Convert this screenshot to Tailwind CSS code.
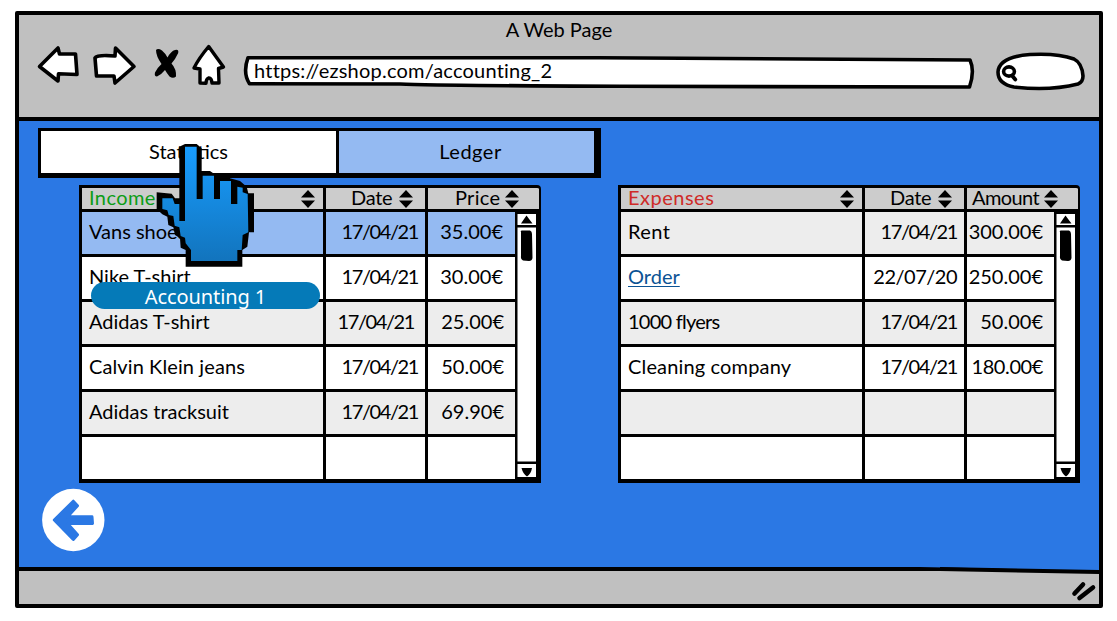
<!DOCTYPE html>
<html lang="en">
<head>
<meta charset="utf-8">
<title>A Web Page</title>
<script src="https://cdn.jsdelivr.net/npm/@tailwindcss/browser@4"></script>
</head>
<body class="h-[621px] overflow-hidden bg-white pl-[15px] pt-[11px] font-[Lato,sans-serif] text-[20px] leading-6 text-black">
<div class="relative flex h-[597px] w-[1088px] flex-col rounded-[2px] border-4 border-black bg-[#2b78e4]">

  <header class="h-[106px] shrink-0 border-b-4 border-black bg-[#c0c0c0]">
    <h1 class="flex h-[26px] items-start justify-center pt-[2px]">A Web Page</h1>
    <div class="flex items-start pl-[17px]">
      <svg class="h-[46px] w-[46px]" viewBox="36 41 46 46" fill="#fff" stroke="#000" stroke-width="3.6" stroke-linejoin="round" stroke-linecap="round"><path d="M39.500 66.500L58 48L59.500 54L75.500 54L77 74.500L58.500 73.800L58 81Z"/></svg>
      <svg class="ml-[9px] h-[46px] w-[46px]" viewBox="91 41 46 46" fill="#fff" stroke="#000" stroke-width="3.6" stroke-linejoin="round" stroke-linecap="round"><path d="M95 58Q97 54.500 115 56L115.500 48L134 66.500L115 83L114 76L96.500 76Z"/></svg>
      <svg class="ml-[15px] h-[46px] w-[30px]" viewBox="152 41 30 46"><path d="M156 50Q158 47.800 162 50.500Q166 54 167.500 57.500Q171 51 175 50Q179 49 178.200 53Q175.500 59 171.500 63.500Q176.500 69 176 76.500Q173 79 169.500 76.500Q167 73.500 165 70Q161 75 157 76.500Q154 76.500 155 72.500Q158 67 161.500 64Q156 56 156 50Z"/></svg>
      <svg class="ml-[8px] h-[48px] w-[38px]" viewBox="190 41 38 48" fill="#fff" stroke="#000" stroke-width="3.4" stroke-linejoin="round" stroke-linecap="round"><path d="M208.700 46.500Q214 54 223.500 67L218.500 68.500L219 83L212 83Q211.500 77.500 208.500 78Q206 79 206 83.300L200 83L200 69L194 68Q199 58 208.700 46.500Z"/></svg>
      <div class="relative ml-[14px] mt-[11px] h-[40px] w-[734px]">
        <svg class="absolute inset-0 h-[40px] w-[734px]" viewBox="242 52 734 40" fill="#fff" stroke="#000" stroke-width="3.6" stroke-linejoin="round"><path d="M248 57.700L600 57.700L970 60Q975 71 969.500 87L620 86.300Q430 85.500 400 84L249.500 83.800Q242.500 73 248 57.700Z"/></svg>
        <span class="relative block pl-[12px] pt-[6px] tracking-[0.22px]">https://ezshop.com/accounting_2</span>
      </div>
      <svg class="ml-[18px] mt-[9px] h-[44px] w-[94px]" viewBox="994 50 94 44" fill="#fff" stroke="#000" stroke-linejoin="round" stroke-linecap="round"><path stroke-width="3.6" d="M998 72Q999 57 1030 54.500Q1058 53 1074 59Q1082 63 1083 76Q1083 82 1078 84Q1050 91 1014 87Q998 84 998 72Z"/><ellipse cx="1009" cy="71.500" rx="5.400" ry="4.600" stroke-width="3.600"/><path stroke-width="3.800" d="M1012 75.500L1015.300 79.500"/></svg>
    </div>
  </header>

  <main class="flex grow flex-col pl-[19px] pt-[7px]">
    <div class="flex h-[50px] w-[563px] border-b-[5px] border-l-[3px] border-r-[7px] border-t-[3px] border-black bg-white">
      <div class="flex w-[295px] items-center justify-center pb-[3px]">Statistics</div>
      <div class="flex grow items-center justify-center border-l-[3px] border-black bg-[#94baf2] pb-[3px] pl-[8px] tracking-[0.5px]">Ledger</div>
    </div>
    <div class="mt-[7px] flex pl-[41px]" id="tables"></div>
    <svg class="ml-[3px] mt-[5px] h-[64px] w-[64px]" viewBox="41 488 64 64"><circle cx="73.300" cy="520" r="31.200" fill="#fff"/><path fill="#2b78e4" stroke="#2b78e4" stroke-width="3" stroke-linejoin="round" d="M54.300 520L73.300 501.200L77.500 505.700L67.500 516.800L92 516.800L92.500 523.500L67.500 523.500L77.500 534.800L73.300 539.500Z"/></svg>
  </main>

  <footer class="relative h-[37px] shrink-0 border-t-4 border-black bg-[#c0c0c0]">
    <svg class="absolute -top-[4px] left-0 h-[37px] w-[1080px]" viewBox="19 567 1080 37"><path fill="#2b78e4" d="M920 566L1099 566L1099 571Q1010 569 920 567Z"/><path d="M940 567L1099 570L1099 574L940 571Z"/><path stroke="#000" stroke-linecap="round" stroke-width="4.600" d="M1074.500 593.500L1083 584.500M1079.500 598L1093 587.500"/></svg>
  </footer>
</div>

<svg class="absolute left-[150px] top-[135px] h-[140px] w-[110px]" viewBox="0 0 330 420">
  <defs><linearGradient id="hand" x1="0" y1="0" x2="0" y2="1"><stop offset="0" stop-color="#189dff"/><stop offset="1" stop-color="#1274bd"/></linearGradient></defs>
  <path d="M88 35L105 27L140 27L155 40L155 108L180 108L192 116L192 124L240 124L240 130L270 138L290 155L295 175L312 175L312 292L297 292L292 335L277 345L277 395L107 395L107 345L92 338L90 310L75 300L70 277L55 270L52 245L37 238L20 222L20 172L65 176L75 190L88 190Z"/>
  <path fill="url(#hand)" d="M105 35L140 35L140 192L158 192L158 122L192 122L192 192L210 192L210 138L243 138L243 207L262 207L262 155L278 158L278 172L293 177L295 292L278 300L275 345L262 345L262 378L123 378L123 345L107 325L105 308L92 303L88 277L74 272L70 243L56 240L52 226L37 222L37 190L68 190L74 207L88 207L88 258L105 258Z"/>
</svg>
<div class="absolute left-[91px] top-[282px] flex h-[27px] w-[229px] items-center justify-center rounded-full bg-[#057ab8] pt-[2px] font-['Noto_Sans',sans-serif] tracking-[-0.1px] text-white">Accounting 1</div>

<script>
const sort = '<svg class="h-[18px] w-[14px] shrink-0" viewBox="0 0 14 18"><path d="M7 0L14 7.600L0 7.600ZM0 10.400L14 10.400L7 18Z"/></svg>';
const D = 'tracking-[-1.4px]';
const tables = [
  { box: '', title: 'Income', titleCls: 'text-[#0b9c16] tracking-[0.4px]', last: 'Price', lastCls: 'tracking-[0.3px] pl-[27px]',
    rows: [
      ['Vans shoes', '', '17/04/21', D, '35.00€', 'pr-[12px]', 'bg-[#94baf2]'],
      ['Nike T-shirt', '', '17/04/21', D, '30.00€', 'pr-[12px]', 'bg-white'],
      ['Adidas T-shirt', '', '17/04/21', D + ' pr-[4px]', '25.00€', 'pr-[11px]', 'bg-[#ededed]'],
      ['Calvin Klein jeans', 'tracking-[0.1px]', '17/04/21', D, '50.00€', 'pr-[11px]', 'bg-white'],
      ['Adidas tracksuit', '', '17/04/21', D, '69.90€', 'pr-[11px]', 'bg-[#ededed]'],
      ['', '', '', '', '', '', 'bg-white'] ] },
  { box: 'ml-[77px]', title: 'Expenses', titleCls: 'text-[#cf2a27] tracking-[0.5px]', last: 'Amount', lastCls: 'tracking-[-0.6px] pl-[5px]',
    rows: [
      ['Rent', 'tracking-[0.4px]', '17/04/21', D, '300.00€', 'pr-[11px]', 'bg-[#ededed]'],
      ['Order', 'text-[#0b5394] underline decoration-1 underline-offset-2', '22/07/20', 'tracking-[-0.5px]', '250.00€', 'pr-[11px]', 'bg-white'],
      ['1000 flyers', 'tracking-[-0.75px]', '17/04/21', D, '50.00€', 'pr-[11px]', 'bg-[#ededed]'],
      ['Cleaning company', 'tracking-[0.15px]', '17/04/21', D, '180.00€', 'tracking-[-0.4px] pr-[11px]', 'bg-white'],
      ['', '', '', '', '', '', 'bg-[#ededed]'],
      ['', '', '', '', '', '', 'bg-white'] ] }
];
const row = ([n, nc, d, dc, p, pc, bg]) => `
  <div class="flex h-[45px] border-b-[3px] border-black last:h-[42px] last:border-b-0 ${bg}">
    <div class="flex w-[241px] items-center pb-[5px] pl-[7px]"><span class="${nc}">${n}</span></div>
    <div class="flex w-[102px] items-center justify-end whitespace-nowrap border-l-[3px] border-black pb-[5px] pr-[7px]"><span class="${dc}">${d}</span></div>
    <div class="flex grow items-center justify-end whitespace-nowrap border-l-[3px] border-black pb-[5px]"><span class="${pc}">${p}</span></div>
  </div>`;
document.getElementById('tables').innerHTML = tables.map(t => `
  <div class="${t.box} h-[298px] w-[462px] rounded-tr-[4px] border-b-4 border-l-[3px] border-r-[2px] border-t-[3px] border-black bg-[#cccccc]">
    <div class="flex h-[24px] border-b-[3px] border-black">
      <div class="flex w-[241px] items-center justify-between pl-[7px] pr-[8px]"><span class="pb-[4px] ${t.titleCls}">${t.title}</span>${sort}</div>
      <div class="flex w-[102px] items-center justify-between border-l-[3px] border-black pl-[25px] pr-[12px]"><span class="pb-[4px] tracking-[-0.3px]">Date</span>${sort}</div>
      <div class="flex grow items-center border-l-[3px] border-black ${t.lastCls}"><span class="mr-[5px] pb-[4px]">${t.last}</span>${sort}</div>
    </div>
    <div class="flex h-[267px]">
      <div class="w-[433px]">${t.rows.map(row).join('')}</div>
      <svg class="h-[267px] w-[24px]" viewBox="0 0 24 267"><rect width="24" height="267"/><rect x="2.500" y="2" width="18.500" height="11" fill="#fff"/><rect x="2.500" y="15.500" width="18.500" height="234" fill="#fff"/><rect x="2.500" y="252" width="18.500" height="13" fill="#fff"/><path d="M11.500 3.500Q14 7 17.500 11.500L6 11.500Q9 7 11.500 3.500ZM6.500 256L17 256Q16 262 12 264.500Q8 262 6.500 256Z"/><path d="M6 20Q5 18 8 18.500L15 18.500Q17 19 17 22L17.500 46Q17 49 14 49L8 48.500Q5.500 48 6 44Z"/></svg>
    </div>
  </div>`).join('');
</script>
</body>
</html>
